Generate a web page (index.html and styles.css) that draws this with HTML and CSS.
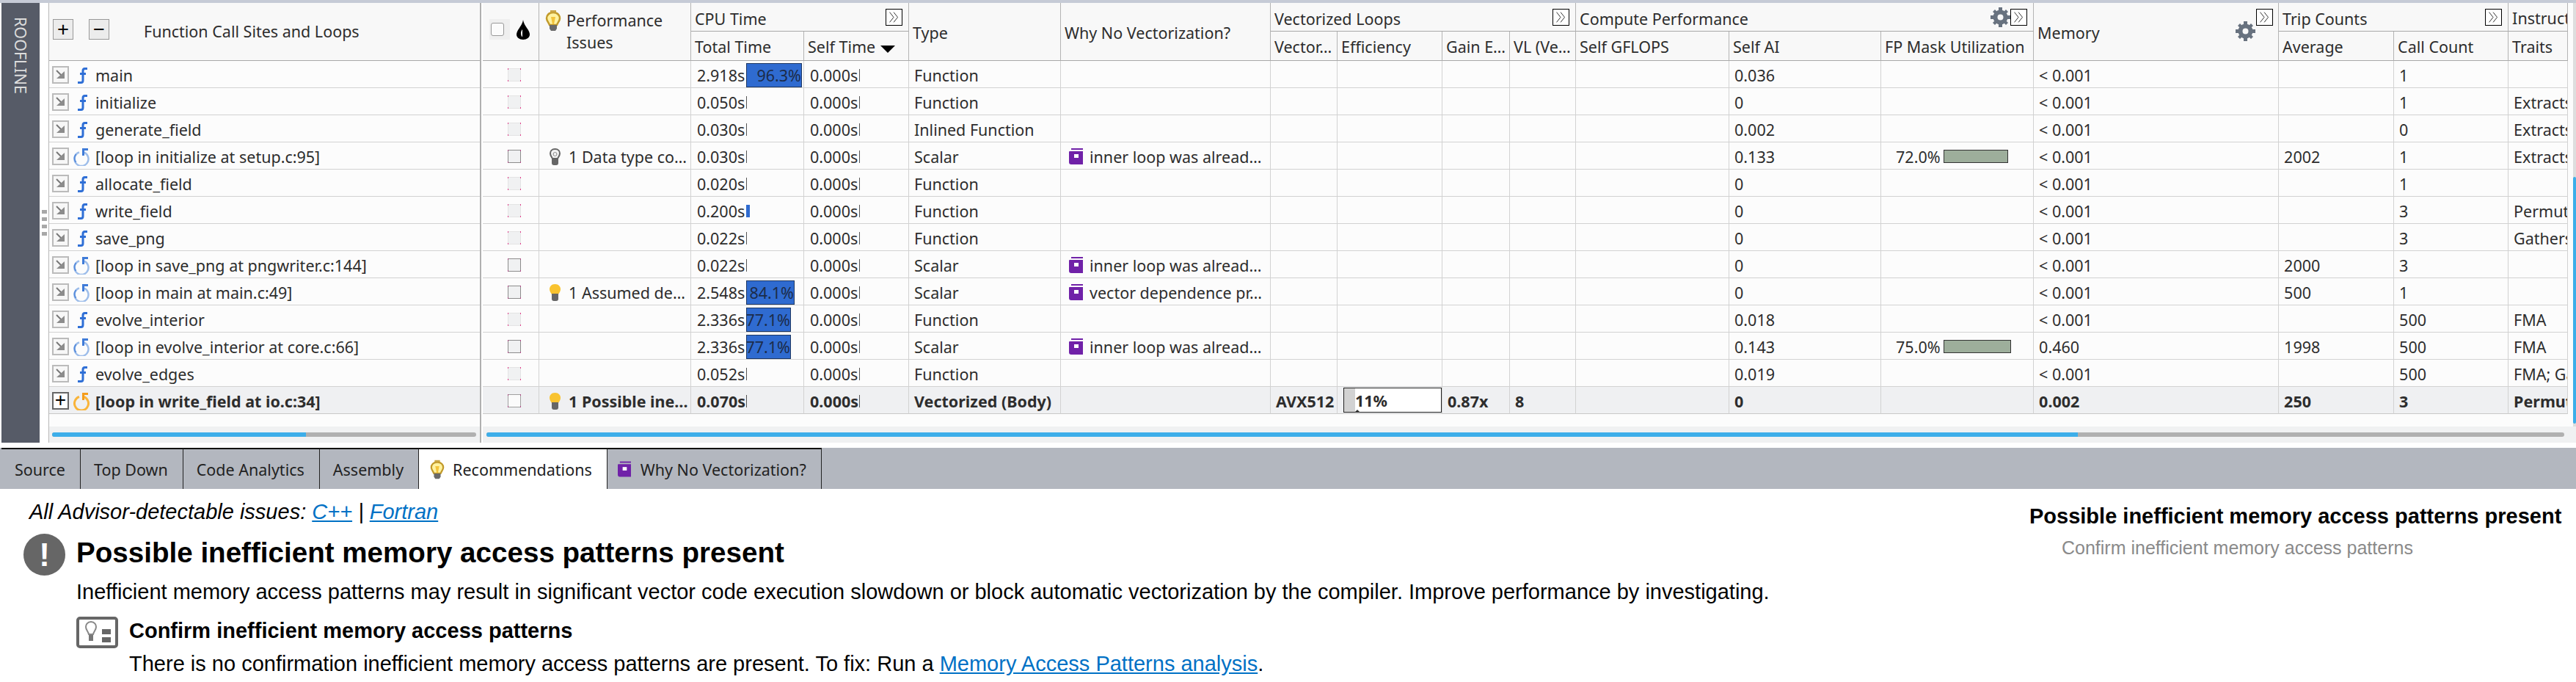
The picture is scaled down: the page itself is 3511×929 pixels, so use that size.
FILE: index.html
```html
<!DOCTYPE html>
<html>
<head>
<meta charset="utf-8">
<title>Survey</title>
<link rel="stylesheet" href="styles.css">
</head>
<body>
<svg class="defs">
  <symbol id="i-func" viewBox="0 0 22 24"><path d="M19 3h-3.500q-2.500 0-2.500 3v13q0 3-2.500 3H6M9 10h8" fill="none" stroke="#2f6fd6" stroke-width="3"/></symbol>
  <symbol id="i-loop" viewBox="0 0 22 25"><path d="M8 6.500a9.500 9.500 0 1 0 6 0" fill="none" stroke="#9dbdea" stroke-width="2.500"/><path d="M3.500 9a9.500 9.500 0 0 0 0 11" fill="none" stroke="#5b8fdc" stroke-width="2"/><path d="M12 1h8v3h-5v7h-3z" fill="#3f7bd8"/></symbol>
  <symbol id="i-loop-on" viewBox="0 0 22 25"><path d="M8 6.500a9.500 9.500 0 1 0 6 0" fill="none" stroke="#f9b43a" stroke-width="3"/><path d="M12 1h8v3h-5v7h-3z" fill="#f59c1a"/></symbol>
  <symbol id="i-jump" viewBox="0 0 19 20"><path d="M4 4l8 8" stroke="#777" stroke-width="2"/><path d="M4 15h11V5z" fill="#8c8c8c"/></symbol>
  <symbol id="i-bulb" viewBox="0 0 17 23"><path d="M8.500 0C3.500 0 1 3.500 1 7c0 3 2 5 3 7h9c1-2 3-4 3-7 0-3.500-2.500-7-7.500-7z" fill="#f9c32f"/><path d="M4 13h9v7q0 3-3 3H7q-3 0-3-3z" fill="#666"/></symbol>
  <symbol id="i-bulb-off" viewBox="0 0 17 23"><path d="M8.500 1C4 1 2 4 2 7c0 3 2 5 3 7h7c1-2 3-4 3-7 0-3-2-6-6.500-6z" fill="#f4f4f4" stroke="#666" stroke-width="2"/><circle cx="8.500" cy="8" r="2.500" fill="none" stroke="#888"/><path d="M4 14h9v6q0 3-3 3H7q-3 0-3-3z" fill="#666"/></symbol>
  <symbol id="i-bulb-lit" viewBox="0 0 22 28"><path d="M11 3C5 3 2 7 2 11c0 3.500 3 6 4 9h10c1-3 4-5.500 4-9 0-4-3-8-9-8z" fill="#fff2a0" stroke="#c29a2a" stroke-width="2.500"/><path d="M8 9h6l-2 10h-2z" fill="#f3c33a"/><path d="M7 0h8v3H7z" fill="#c9a545"/><path d="M6 20h10v5l-2 3H8l-2-3z" fill="#6a6a6a"/></symbol>
  <symbol id="i-book" viewBox="0 0 19 22"><path d="M3 0h16v2H3z" fill="#7021a8"/><path d="M1 4h18v18H3q-3 0-3-3V5q0-1 1-1z" fill="#7021a8"/><path d="M7 8h6v5H7z" fill="#fff"/></symbol>
  <symbol id="i-chev" viewBox="0 0 23 23"><path d="M5 4l6 7.500-6 7.500M11 4l6 7.500-6 7.500" fill="none" stroke="#222"/></symbol>
  <symbol id="i-gear" viewBox="0 0 27 27"><circle cx="13.500" cy="13.500" r="7" fill="none" stroke="#68727f" stroke-width="6"/><path d="M11 0h5v5h-5zM11 22h5v5h-5zM0 11h5v5H0zM22 11h5v5h-5zM3 6l3-3 4 4-3 3zM24 21l-3 3-4-4 3-3zM3 21l3 3 4-4-3-3zM24 6l-3-3-4 4 3 3z" fill="#68727f"/></symbol>
  <symbol id="i-drop" viewBox="0 0 18 27"><path d="M9 0c1 5 2 6 5 11 3 4 4 7 4 9 0 4-4 7-9 7s-9-3-9-7c0-2 1-5 4-9 3-5 4-6 5-11z" fill="#000"/><path d="M6 18c0-2 1-4 2-5v10c-1 0-2-2-2-5z" fill="#fff"/></symbol>
  <symbol id="i-action" viewBox="0 0 57 43"><rect x="2" y="2" width="53" height="39" rx="3" fill="#fff" stroke="#666" stroke-width="4"/><path d="M20 7c-5 0-7 4-7 7 0 4 3 6 4 10h6c1-4 4-6 4-10 0-3-2-7-7-7z" fill="none" stroke="#888" stroke-width="2"/><path d="M17 25h6v8h-6z" fill="#777"/><path d="M35 17h12v7H35zM35 28h12v7H35z" fill="#666"/></symbol>
</svg>

<div class="top-strip"></div>

<div class="survey">
  <div class="roofline"><span>ROOFLINE</span></div>
  <div class="gutter"><i></i><i></i><i></i><i></i></div>

  <div class="panel left-panel">
    <div class="panel-body">
      <div class="sites">
        <div class="sites-head">
          <div class="tool-btn">+</div>
          <div class="tool-btn minus">−</div>
          <div class="sites-title">Function Call Sites and Loops</div>
        </div>
        <div class="site"><svg class="jump"><use href="#i-jump"/></svg><svg class="kind"><use href="#i-func"/></svg><span>main</span></div>
        <div class="site"><svg class="jump"><use href="#i-jump"/></svg><svg class="kind"><use href="#i-func"/></svg><span>initialize</span></div>
        <div class="site"><svg class="jump"><use href="#i-jump"/></svg><svg class="kind"><use href="#i-func"/></svg><span>generate_field</span></div>
        <div class="site"><svg class="jump"><use href="#i-jump"/></svg><svg class="kind"><use href="#i-loop"/></svg><span>[loop in initialize at setup.c:95]</span></div>
        <div class="site"><svg class="jump"><use href="#i-jump"/></svg><svg class="kind"><use href="#i-func"/></svg><span>allocate_field</span></div>
        <div class="site"><svg class="jump"><use href="#i-jump"/></svg><svg class="kind"><use href="#i-func"/></svg><span>write_field</span></div>
        <div class="site"><svg class="jump"><use href="#i-jump"/></svg><svg class="kind"><use href="#i-func"/></svg><span>save_png</span></div>
        <div class="site"><svg class="jump"><use href="#i-jump"/></svg><svg class="kind"><use href="#i-loop"/></svg><span>[loop in save_png at pngwriter.c:144]</span></div>
        <div class="site"><svg class="jump"><use href="#i-jump"/></svg><svg class="kind"><use href="#i-loop"/></svg><span>[loop in main at main.c:49]</span></div>
        <div class="site"><svg class="jump"><use href="#i-jump"/></svg><svg class="kind"><use href="#i-func"/></svg><span>evolve_interior</span></div>
        <div class="site"><svg class="jump"><use href="#i-jump"/></svg><svg class="kind"><use href="#i-loop"/></svg><span>[loop in evolve_interior at core.c:66]</span></div>
        <div class="site"><svg class="jump"><use href="#i-jump"/></svg><svg class="kind"><use href="#i-func"/></svg><span>evolve_edges</span></div>
        <div class="site selected"><div class="expand">+</div><svg class="kind"><use href="#i-loop-on"/></svg><span>[loop in write_field at io.c:34]</span></div>
      </div>
    </div>
    <div class="hscroll"><div class="hscroll-track"><div class="hscroll-thumb left-thumb"></div></div></div>
  </div>

  <div class="splitter"></div>

  <div class="panel right-panel">
    <div class="panel-body">
      <table class="grid">
        <colgroup>
          <col class="c-check"><col class="c-perf"><col class="c-total"><col class="c-self"><col class="c-type"><col class="c-why">
          <col class="c-vec"><col class="c-eff"><col class="c-gain"><col class="c-vl"><col class="c-flops"><col class="c-ai"><col class="c-fp">
          <col class="c-mem"><col class="c-avg"><col class="c-call"><col class="c-traits">
        </colgroup>
        <thead>
          <tr class="group-row">
            <th rowspan="2"><div class="head-check"><div class="check-wrap"><div class="check-box"></div></div><svg class="drop"><use href="#i-drop"/></svg></div></th>
            <th rowspan="2"><div class="head-perf"><svg class="bulb-lit"><use href="#i-bulb-lit"/></svg><div>Performance<br>Issues</div></div></th>
            <th colspan="2"><div class="group-head">CPU Time<svg class="chev"><use href="#i-chev"/></svg></div></th>
            <th rowspan="2">Type</th>
            <th rowspan="2">Why No Vectorization?</th>
            <th colspan="4"><div class="group-head">Vectorized Loops<svg class="chev"><use href="#i-chev"/></svg></div></th>
            <th colspan="3"><div class="group-head">Compute Performance<div class="head-tools"><svg class="gear"><use href="#i-gear"/></svg><svg class="chev"><use href="#i-chev"/></svg></div></div></th>
            <th rowspan="2" class="mem-head">Memory<svg class="gear"><use href="#i-gear"/></svg><svg class="chev"><use href="#i-chev"/></svg></th>
            <th colspan="2"><div class="group-head">Trip Counts<svg class="chev"><use href="#i-chev"/></svg></div></th>
            <th>Instruct</th>
          </tr>
          <tr class="sub-row">
            <th>Total Time</th>
            <th>Self Time <span class="sort"></span></th>
            <th>Vector…</th>
            <th>Efficiency</th>
            <th>Gain E…</th>
            <th>VL (Ve…</th>
            <th>Self GFLOPS</th>
            <th>Self AI</th>
            <th>FP Mask Utilization</th>
            <th>Average</th>
            <th>Call Count</th>
            <th>Traits</th>
          </tr>
        </thead>
        <tbody>
          <tr>
            <td><div class="chk"></div></td><td></td>
            <td><div class="time"><span class="val">2.918s</span><div class="bar" style="width:76px">96.3%</div></div></td>
            <td><div class="time"><span class="val">0.000s</span><div class="tick"></div></div></td>
            <td>Function</td><td></td><td></td><td></td><td></td><td></td><td></td><td>0.036</td><td></td><td>&lt; 0.001</td><td></td><td>1</td><td></td>
          </tr>
          <tr>
            <td><div class="chk"></div></td><td></td>
            <td><div class="time"><span class="val">0.050s</span><div class="tick"></div></div></td>
            <td><div class="time"><span class="val">0.000s</span><div class="tick"></div></div></td>
            <td>Function</td><td></td><td></td><td></td><td></td><td></td><td></td><td>0</td><td></td><td>&lt; 0.001</td><td></td><td>1</td><td>Extracts</td>
          </tr>
          <tr>
            <td><div class="chk"></div></td><td></td>
            <td><div class="time"><span class="val">0.030s</span><div class="tick"></div></div></td>
            <td><div class="time"><span class="val">0.000s</span><div class="tick"></div></div></td>
            <td>Inlined Function</td><td></td><td></td><td></td><td></td><td></td><td></td><td>0.002</td><td></td><td>&lt; 0.001</td><td></td><td>0</td><td>Extracts</td>
          </tr>
          <tr>
            <td><div class="chk dark"></div></td>
            <td><div class="issue-cell"><svg class="bulb"><use href="#i-bulb-off"/></svg>1 Data type co…</div></td>
            <td><div class="time"><span class="val">0.030s</span><div class="tick"></div></div></td>
            <td><div class="time"><span class="val">0.000s</span><div class="tick"></div></div></td>
            <td>Scalar</td>
            <td><div class="why-cell"><svg class="book"><use href="#i-book"/></svg>inner loop was alread…</div></td>
            <td></td><td></td><td></td><td></td><td></td><td>0.133</td>
            <td><div class="mask"><span class="mask-val">72.0%</span><div class="mask-bar" style="width:88px"></div></div></td>
            <td>&lt; 0.001</td><td>2002</td><td>1</td><td>Extracts</td>
          </tr>
          <tr>
            <td><div class="chk"></div></td><td></td>
            <td><div class="time"><span class="val">0.020s</span><div class="tick"></div></div></td>
            <td><div class="time"><span class="val">0.000s</span><div class="tick"></div></div></td>
            <td>Function</td><td></td><td></td><td></td><td></td><td></td><td></td><td>0</td><td></td><td>&lt; 0.001</td><td></td><td>1</td><td></td>
          </tr>
          <tr>
            <td><div class="chk"></div></td><td></td>
            <td><div class="time"><span class="val">0.200s</span><div class="tick wide"></div></div></td>
            <td><div class="time"><span class="val">0.000s</span><div class="tick"></div></div></td>
            <td>Function</td><td></td><td></td><td></td><td></td><td></td><td></td><td>0</td><td></td><td>&lt; 0.001</td><td></td><td>3</td><td>Permutes</td>
          </tr>
          <tr>
            <td><div class="chk"></div></td><td></td>
            <td><div class="time"><span class="val">0.022s</span><div class="tick"></div></div></td>
            <td><div class="time"><span class="val">0.000s</span><div class="tick"></div></div></td>
            <td>Function</td><td></td><td></td><td></td><td></td><td></td><td></td><td>0</td><td></td><td>&lt; 0.001</td><td></td><td>3</td><td>Gathers</td>
          </tr>
          <tr>
            <td><div class="chk dark"></div></td><td></td>
            <td><div class="time"><span class="val">0.022s</span><div class="tick"></div></div></td>
            <td><div class="time"><span class="val">0.000s</span><div class="tick"></div></div></td>
            <td>Scalar</td>
            <td><div class="why-cell"><svg class="book"><use href="#i-book"/></svg>inner loop was alread…</div></td>
            <td></td><td></td><td></td><td></td><td></td><td>0</td><td></td><td>&lt; 0.001</td><td>2000</td><td>3</td><td></td>
          </tr>
          <tr>
            <td><div class="chk dark"></div></td>
            <td><div class="issue-cell"><svg class="bulb"><use href="#i-bulb"/></svg>1 Assumed de…</div></td>
            <td><div class="time"><span class="val">2.548s</span><div class="bar" style="width:66px">84.1%</div></div></td>
            <td><div class="time"><span class="val">0.000s</span><div class="tick"></div></div></td>
            <td>Scalar</td>
            <td><div class="why-cell"><svg class="book"><use href="#i-book"/></svg>vector dependence pr…</div></td>
            <td></td><td></td><td></td><td></td><td></td><td>0</td><td></td><td>&lt; 0.001</td><td>500</td><td>1</td><td></td>
          </tr>
          <tr>
            <td><div class="chk"></div></td><td></td>
            <td><div class="time"><span class="val">2.336s</span><div class="bar" style="width:61px">77.1%</div></div></td>
            <td><div class="time"><span class="val">0.000s</span><div class="tick"></div></div></td>
            <td>Function</td><td></td><td></td><td></td><td></td><td></td><td></td><td>0.018</td><td></td><td>&lt; 0.001</td><td></td><td>500</td><td>FMA</td>
          </tr>
          <tr>
            <td><div class="chk dark"></div></td><td></td>
            <td><div class="time"><span class="val">2.336s</span><div class="bar" style="width:61px">77.1%</div></div></td>
            <td><div class="time"><span class="val">0.000s</span><div class="tick"></div></div></td>
            <td>Scalar</td>
            <td><div class="why-cell"><svg class="book"><use href="#i-book"/></svg>inner loop was alread…</div></td>
            <td></td><td></td><td></td><td></td><td></td><td>0.143</td>
            <td><div class="mask"><span class="mask-val">75.0%</span><div class="mask-bar" style="width:92px"></div></div></td>
            <td>0.460</td><td>1998</td><td>500</td><td>FMA</td>
          </tr>
          <tr>
            <td><div class="chk"></div></td><td></td>
            <td><div class="time"><span class="val">0.052s</span><div class="tick"></div></div></td>
            <td><div class="time"><span class="val">0.000s</span><div class="tick"></div></div></td>
            <td>Function</td><td></td><td></td><td></td><td></td><td></td><td></td><td>0.019</td><td></td><td>&lt; 0.001</td><td></td><td>500</td><td>FMA; Gathers</td>
          </tr>
          <tr class="selected">
            <td><div class="chk clear"></div></td>
            <td><div class="issue-cell"><svg class="bulb"><use href="#i-bulb"/></svg>1 Possible ine…</div></td>
            <td><div class="time"><span class="val">0.070s</span><div class="tick"></div></div></td>
            <td><div class="time"><span class="val">0.000s</span><div class="tick"></div></div></td>
            <td>Vectorized (Body)</td><td></td><td>AVX512</td>
            <td class="eff-cell"><div class="eff"><div class="eff-fill"></div><span>11%</span><div class="eff-mark"></div></div></td>
            <td>0.87x</td><td>8</td><td></td><td>0</td><td></td><td>0.002</td><td>250</td><td>3</td><td>Permutes</td>
          </tr>
        </tbody>
      </table>
      <div class="vscroll"><div class="vscroll-thumb"></div></div>
    </div>
    <div class="hscroll"><div class="hscroll-track"><div class="hscroll-thumb right-thumb"></div></div></div>
  </div>
</div>

<div class="tabs">
  <div class="tab">Source</div>
  <div class="tab">Top Down</div>
  <div class="tab">Code Analytics</div>
  <div class="tab">Assembly</div>
  <div class="tab active"><svg class="tab-bulb"><use href="#i-bulb-lit"/></svg>Recommendations</div>
  <div class="tab"><svg class="tab-book"><use href="#i-book"/></svg>Why No Vectorization?</div>
</div>

<div class="advice">
  <div class="advice-main">
    <div class="all-issues">All Advisor-detectable issues: <a href="#">C++</a> | <a href="#">Fortran</a></div>
    <div class="issue">
      <div class="issue-mark">!</div>
      <div class="issue-text">
        <h1>Possible inefficient memory access patterns present</h1>
        <p>Inefficient memory access patterns may result in significant vector code execution slowdown or block automatic vectorization by the compiler. Improve performance by investigating.</p>
        <div class="action">
          <svg class="action-icon"><use href="#i-action"/></svg>
          <div class="action-text">
            <h2>Confirm inefficient memory access patterns</h2>
            <p>There is no confirmation inefficient memory access patterns are present. To fix: Run a <a href="#">Memory Access Patterns analysis</a>.</p>
          </div>
        </div>
      </div>
    </div>
  </div>
  <div class="advice-side">
    <div class="side-title">Possible inefficient memory access patterns present</div>
    <div class="side-link">Confirm inefficient memory access patterns</div>
  </div>
</div>
</body>
</html>
```

FILE: styles.css
```css
* {
    box-sizing: border-box;
}

html, body {
    margin: 0;
    height: 929px;
    overflow: hidden;
    background: #fff;
    font-family: "Noto Sans", sans-serif;
    font-size: 21.5px;
    color: #2d2d2d;
}

.defs {
    display: none;
}

.top-strip {
    height: 4px;
    background: #c6cbd6;
}

/* Survey grid */
.survey {
    display: flex;
    height: 599px;
    padding-left: 2px;
    background: #fcfcfc;
}

.roofline {
    width: 52px;
    background: #565b67;
    color: #dcdcdc;
    padding-top: 19px;
    display: flex;
    justify-content: center;
}

.roofline span {
    writing-mode: vertical-rl;
    line-height: 1;
}

.gutter {
    width: 13px;
    display: flex;
    flex-direction: column;
    align-items: center;
    justify-content: center;
    gap: 5px;
    border-right: 1px solid #b8b8b8;
    background: #fff;
}

.gutter i {
    width: 7px;
    height: 5px;
    background: #a8a8a8;
}

.panel {
    display: flex;
    flex-direction: column;
    overflow: hidden;
}

.left-panel {
    width: 587px;
}

.right-panel {
    flex: 1;
}

.panel-body {
    flex: 1;
    display: flex;
    min-height: 0;
}

.splitter {
    width: 4px;
    border-left: 2px solid #b0b0b0;
    background: #fff;
}

.hscroll {
    height: 22px;
    padding: 8px 5px 8px 4px;
    background: #f0f1f2;
}

.right-panel .hscroll {
    padding: 8px 16px 8px 5px;
}

.hscroll-track {
    height: 6px;
    border-radius: 3px;
    background: #b0b0b0;
    overflow: hidden;
}

.hscroll-thumb {
    height: 6px;
    background: #3daee9;
}

.left-thumb {
    width: 346px;
}

.right-thumb {
    width: 2169px;
}

/* Left column */
.sites {
    flex: 1;
}

.sites-head {
    height: 79px;
    display: flex;
    align-items: center;
    background: #f8f8f8;
    border-bottom: 1px solid #a8a8a8;
    padding: 0 0 6px 5px;
}

.tool-btn {
    width: 28px;
    height: 28px;
    background: #ececec;
    border: 1px solid #999;
    color: #000;
    font-size: 28px;
    line-height: 24px;
    text-align: center;
}

.tool-btn.minus {
    margin-left: 21px;
}

.sites-title {
    margin-left: 47px;
    padding-top: 4px;
}

.site {
    height: 37px;
    display: flex;
    align-items: center;
    padding: 2px 0 0 4px;
    border-bottom: 1px solid #d2d2d2;
}

.jump {
    width: 23px;
    height: 24px;
    background: #f7f7f7;
    border: 2px solid #bbb;
    flex: none;
}

.kind {
    width: 22px;
    height: 25px;
    margin-left: 6px;
    margin-right: 8px;
    flex: none;
}

.site.selected {
    background: #eff0f2;
    font-weight: bold;
    border-bottom-color: #c8c8c8;
}

.expand {
    width: 23px;
    height: 24px;
    flex: none;
    background: #fff;
    border: 2px solid #666;
    color: #000;
    font-weight: normal;
    font-size: 27px;
    line-height: 18px;
    text-align: center;
}

/* Metrics table */
.grid {
    width: 2842px;
    flex: none;
    table-layout: fixed;
    border-collapse: separate;
    border-spacing: 0;
    align-self: flex-start;
}

.c-check { width: 77px; }
.c-perf { width: 207px; }
.c-total { width: 154px; }
.c-self { width: 143px; }
.c-type { width: 207px; }
.c-why { width: 286px; }
.c-vec { width: 91px; }
.c-eff { width: 143px; }
.c-gain { width: 92px; }
.c-vl { width: 90px; }
.c-flops { width: 209px; }
.c-ai { width: 207px; }
.c-fp { width: 208px; }
.c-mem { width: 334px; }
.c-avg { width: 157px; }
.c-call { width: 156px; }
.c-traits { width: 81px; }

.grid th {
    background: #f8f8f8;
    font-weight: normal;
    text-align: left;
    padding: 2px 0 0 5px;
    border-right: 1px solid #b4b4b4;
    border-bottom: 1px solid #a8a8a8;
    white-space: nowrap;
    overflow: hidden;
}

.group-row {
    height: 39px;
}

.sub-row {
    height: 40px;
}

.group-head {
    display: flex;
    justify-content: space-between;
    align-items: center;
    padding-right: 8px;
    position: relative;
    top: 1px;
}

.head-tools {
    display: flex;
    align-items: center;
}

.chev {
    width: 23px;
    height: 23px;
    background: #fff;
    border: 1px solid #000;
    flex: none;
    position: relative;
    top: -2px;
}

.gear {
    width: 27px;
    height: 27px;
    flex: none;
    position: relative;
    top: -2px;
}

.mem-head {
    position: relative;
}

.mem-head .chev {
    position: absolute;
    top: 8px;
    right: 7px;
}

.mem-head .gear {
    position: absolute;
    top: 25px;
    right: 31px;
}

.head-check {
    display: flex;
    align-items: center;
    gap: 9px;
    padding: 0 0 8px 4px;
}

.check-wrap {
    width: 28px;
    height: 28px;
    background: #efefef;
    display: flex;
    align-items: center;
    padding-left: 2px;
}

.check-box {
    width: 18px;
    height: 18px;
    background: #fbfbfb;
    border: 1px solid #999;
    border-radius: 3px;
}

.drop {
    width: 18px;
    height: 27px;
}

.head-perf {
    display: flex;
    gap: 7px;
    line-height: 30px;
    padding: 0 0 3px 3px;
}

.bulb-lit {
    width: 22px;
    height: 28px;
    flex: none;
    margin-top: 1px;
}

.sort {
    display: inline-block;
    width: 0;
    height: 0;
    margin-left: 1px;
    border-left: 10px solid transparent;
    border-right: 10px solid transparent;
    border-top: 10px solid #000;
    vertical-align: 0;
}

.grid td {
    height: 37px;
    padding: 2px 0 0 7px;
    background: #fcfcfc;
    border-right: 1px solid #d2d2d2;
    border-bottom: 1px solid #d2d2d2;
    white-space: nowrap;
    overflow: hidden;
}

.grid tr.selected td {
    background: #eff0f2;
    font-weight: bold;
    border-bottom-color: #c8c8c8;
}

.chk {
    --edge: #e4e4e4;
    --corner: #e0408c;
    width: 18px;
    height: 18px;
    margin-left: 27px;
    background-color: #f0f1f2;
    background-image:
        linear-gradient(var(--corner), var(--corner)), linear-gradient(var(--corner), var(--corner)),
        linear-gradient(var(--corner), var(--corner)), linear-gradient(var(--corner), var(--corner)),
        linear-gradient(var(--edge), var(--edge)), linear-gradient(var(--edge), var(--edge)),
        linear-gradient(var(--edge), var(--edge)), linear-gradient(var(--edge), var(--edge));
    background-size: 1px 2px, 1px 2px, 1px 2px, 1px 2px, 100% 1px, 100% 1px, 1px 100%, 1px 100%;
    background-position: 0 0, 100% 0, 0 100%, 100% 100%, 0 0, 0 100%, 0 0, 100% 0;
    background-repeat: no-repeat;
}

.chk.dark {
    --edge: #8c8c8c;
    --corner: #b04a86;
}

.chk.clear {
    --edge: #a0a0a0;
    --corner: #b04a86;
    background-color: #fbfbfb;
}

.issue-cell {
    display: flex;
    align-items: center;
    gap: 10px;
    padding-left: 6px;
}

.bulb {
    width: 17px;
    height: 23px;
    flex: none;
}

.why-cell {
    display: flex;
    align-items: center;
    gap: 9px;
    padding-left: 4px;
}

.book {
    width: 19px;
    height: 22px;
    flex: none;
}

.time {
    display: flex;
    align-items: center;
    padding-left: 1px;
}

.val {
    width: 67px;
    flex: none;
}

.bar {
    height: 33px;
    background: #2f6bd0;
    border: 1px solid #1d3763;
    color: #1c2c4a;
    line-height: 31px;
    text-align: right;
    font-weight: normal;
    display: flex;
    justify-content: flex-end;
}

.tick {
    width: 1px;
    height: 17px;
    background: #555;
}

.tick.wide {
    width: 5px;
    background: #2f6bd0;
}

.mask {
    display: flex;
    align-items: center;
    gap: 4px;
    padding-left: 13px;
}

.mask-bar {
    height: 18px;
    background: #9dae9b;
    border: 1px solid #333;
}

.grid td.eff-cell {
    padding: 0 0 0 8px;
    position: relative;
}

.eff {
    width: 134px;
    height: 34px;
    background: #fff;
    border: 1px solid #222;
    display: flex;
    align-items: center;
    position: relative;
}

.eff-fill {
    width: 15px;
    height: 100%;
    background: #d2d2d2;
    flex: none;
}

.eff-mark {
    position: absolute;
    left: 14px;
    bottom: -1px;
    border-left: 4px solid transparent;
    border-right: 4px solid transparent;
    border-bottom: 4px solid #333;
}

.vscroll {
    flex: 1;
    margin-left: 7px;
    background: #dedede;
    padding-top: 237px;
}

.vscroll-thumb {
    height: 336px;
    background: #3daee9;
    border-radius: 2px;
}

/* Tabs */
.tabs {
    margin-top: 7px;
    height: 56px;
    background: #b3b7bf;
    display: flex;
}

.tab {
    display: flex;
    align-items: center;
    padding: 0 20px 0 18px;
    border-top: 2px solid #111;
    border-right: 1px solid #222;
    color: #222;
}

.tab:first-child {
    margin-left: 2px;
}

.tab.active {
    background: #fff;
}

.tab-bulb {
    width: 20px;
    height: 27px;
    margin-left: -3px;
    margin-right: 11px;
}

.tab-book {
    width: 18px;
    height: 22px;
    margin-left: -4px;
    margin-right: 13px;
}

/* Recommendations */
.advice {
    display: flex;
    justify-content: space-between;
    height: 263px;
    background: #fff;
    color: #000;
    font-family: "Liberation Sans", sans-serif;
}

.advice a {
    color: #0071c5;
    text-decoration: underline;
}

.advice-main {
    padding-top: 14px;
}

.all-issues {
    font-style: italic;
    font-size: 29px;
    line-height: 34px;
    padding-left: 40px;
}

.issue {
    display: flex;
    gap: 15px;
    padding-left: 32px;
    margin-top: 13px;
}

.issue-mark {
    width: 57px;
    height: 57px;
    flex: none;
    border-radius: 50%;
    background: #666;
    color: #fff;
    font-size: 44px;
    font-weight: bold;
    line-height: 57px;
    text-align: center;
}

.issue-text h1 {
    margin: 0;
    font-size: 38.6px;
    line-height: 52px;
}

.issue-text p {
    margin: 0;
    font-size: 29px;
    line-height: 34px;
}

.issue-text > p {
    margin-top: 10px;
}

.action {
    display: flex;
    gap: 15px;
    margin-top: 17px;
}

.action-icon {
    width: 57px;
    height: 43px;
    flex: none;
}

.action-text {
    padding-top: 2px;
}

.action h2 {
    margin: 0 0 11px;
    font-size: 29px;
    line-height: 34px;
}

.advice-side {
    width: 725px;
    margin-right: 20px;
    padding-top: 20px;
}

.side-title {
    font-size: 29px;
    font-weight: bold;
    line-height: 34px;
    white-space: nowrap;
}

.side-link {
    margin-top: 9px;
    padding-left: 44px;
    font-size: 25px;
    line-height: 34px;
    color: #8a8a8a;
}
```
